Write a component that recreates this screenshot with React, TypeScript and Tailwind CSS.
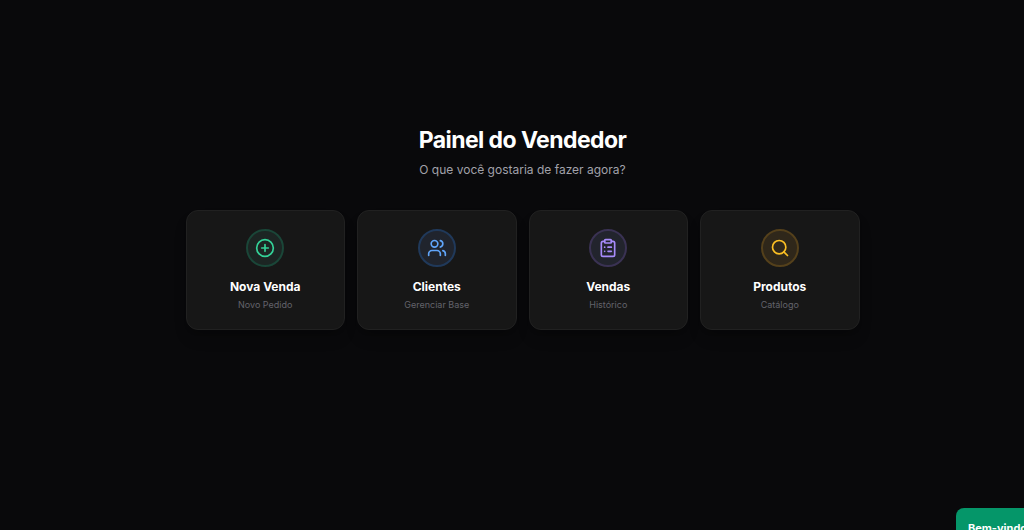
import { CirclePlus, ClipboardList, Search, Users } from 'lucide-react';
import type { LucideIcon } from 'lucide-react';

type Action = {
  title: string;
  subtitle: string;
  icon: LucideIcon;
  iconClass: string;
};

const actions: Action[] = [
  {
    title: 'Nova Venda',
    subtitle: 'Novo Pedido',
    icon: CirclePlus,
    iconClass: 'bg-[#1c2523] border-[#1a4638] text-[#34d399]',
  },
  {
    title: 'Clientes',
    subtitle: 'Gerenciar Base',
    icon: Users,
    iconClass: 'bg-[#20242d] border-[#20395a] text-[#60a5fa]',
  },
  {
    title: 'Vendas',
    subtitle: 'Histórico',
    icon: ClipboardList,
    iconClass: 'bg-[#22242d] border-[#3a3253] text-[#a78bfa]',
  },
  {
    title: 'Produtos',
    subtitle: 'Catálogo',
    icon: Search,
    iconClass: 'bg-[#2f271a] border-[#54401b] text-[#fbbf24]',
  },
];

function ActionCard({ title, subtitle, icon: Icon, iconClass }: Action) {
  return (
    <button
      type="button"
      className="flex flex-col items-center rounded-xl border border-[#212121] bg-[#171717] px-4 pt-[18px] pb-4 shadow-lg shadow-black/20"
    >
      <span className={`flex size-[38px] items-center justify-center rounded-full border-2 ${iconClass}`}>
        <Icon size={20} strokeWidth={2} />
      </span>
      <span className="mt-2.5 text-[12px] leading-5 font-bold text-white">{title}</span>
      <span className="text-[9px] leading-4 text-[#63636b]">{subtitle}</span>
    </button>
  );
}

function Toast() {
  return (
    <div
      role="status"
      className="fixed -right-[232px] -bottom-[42px] w-[300px] rounded-lg bg-[#059669] px-3 py-3 text-white"
    >
      <p className="text-[11px] leading-4 font-bold">Bem-vindo</p>
      <div className="h-6" />
    </div>
  );
}

export default function App() {
  return (
    <div className="min-h-screen bg-[#09090b] font-['Inter',sans-serif] text-white">
      <main className="flex min-h-screen flex-col items-center justify-center pb-[76px] pl-[21px]">
        <header className="mb-[30px] text-center">
          <h1 className="text-[23px] leading-8 font-bold tracking-tight">Painel do Vendedor</h1>
          <p className="mt-1 text-[12px] leading-5 text-[#a1a1aa]">O que você gostaria de fazer agora?</p>
        </header>
        <div className="grid w-full max-w-[674px] grid-cols-2 gap-3 sm:grid-cols-4">
          {actions.map((action) => (
            <ActionCard key={action.title} {...action} />
          ))}
        </div>
      </main>
      <Toast />
    </div>
  );
}
